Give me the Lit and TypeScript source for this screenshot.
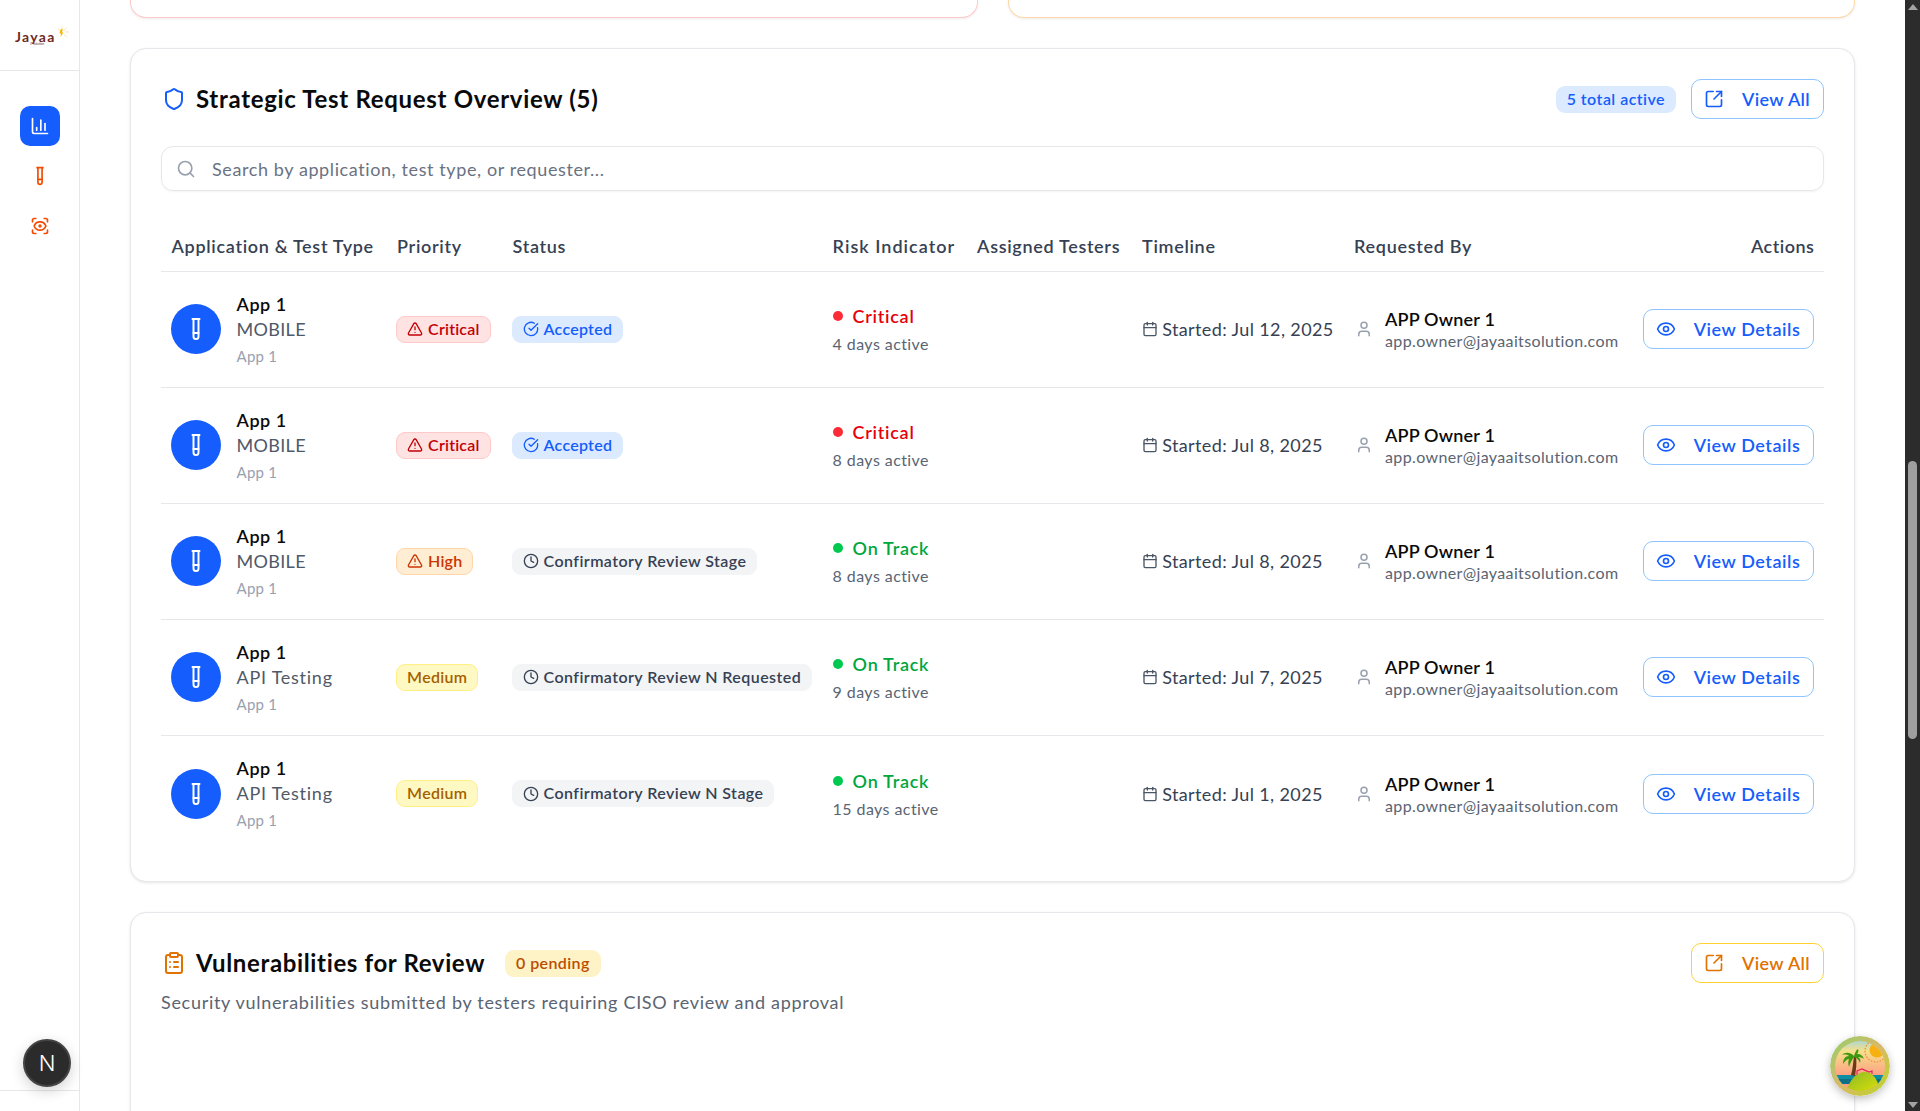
import { LitElement, html, css, svg } from "lit";
import { customElement } from "lit/decorators.js";

const I = {
  tube: svg`<path d="M14.5 2v17.5c0 1.4-1.1 2.5-2.5 2.5c-1.4 0-2.5-1.1-2.5-2.5V2"/><path d="M8.5 2h7"/><path d="M14.5 16h-5"/>`,
  chart: svg`<path d="M3 3v16a2 2 0 0 0 2 2h16"/><path d="M18 17V9"/><path d="M13 17V5"/><path d="M8 17v-3"/>`,
  scan: svg`<path d="M3 7V5a2 2 0 0 1 2-2h2"/><path d="M17 3h2a2 2 0 0 1 2 2v2"/><path d="M21 17v2a2 2 0 0 1-2 2h-2"/><path d="M7 21H5a2 2 0 0 1-2-2v-2"/><circle cx="12" cy="12" r="1"/><path d="M18.944 12.33a1 1 0 0 0 0-.66 7.5 7.5 0 0 0-13.888 0 1 1 0 0 0 0 .66 7.5 7.5 0 0 0 13.888 0"/>`,
  shield: svg`<path d="M20 13c0 5-3.5 7.5-7.66 8.95a1 1 0 0 1-.67-.01C7.5 20.5 4 18 4 13V6a1 1 0 0 1 1-1c2 0 4.5-1.2 6.24-2.72a1.17 1.17 0 0 1 1.52 0C14.51 3.81 17 5 19 5a1 1 0 0 1 1 1z"/>`,
  search: svg`<circle cx="11" cy="11" r="8"/><path d="m21 21-4.3-4.3"/>`,
  ext: svg`<path d="M21 13v6a2 2 0 0 1-2 2H5a2 2 0 0 1-2-2V5a2 2 0 0 1 2-2h6"/><path d="m21 3-9 9"/><path d="M15 3h6v6"/>`,
  alert: svg`<path d="m21.73 18-8-14a2 2 0 0 0-3.48 0l-8 14A2 2 0 0 0 4 21h16a2 2 0 0 0 1.73-3"/><path d="M12 9v4"/><path d="M12 17h.01"/>`,
  check: svg`<path d="M21.801 10A10 10 0 1 1 17 3.335"/><path d="m9 11 3 3L22 4"/>`,
  clock: svg`<circle cx="12" cy="12" r="10"/><path d="M12 6v6l4 2"/>`,
  cal: svg`<path d="M8 2v4"/><path d="M16 2v4"/><rect x="3" y="4" width="18" height="18" rx="2"/><path d="M3 10h18"/>`,
  user: svg`<path d="M19 21v-2a4 4 0 0 0-4-4H9a4 4 0 0 0-4 4v2"/><circle cx="12" cy="7" r="4"/>`,
  eye: svg`<path d="M2.062 12.348a1 1 0 0 1 0-.696 10.75 10.75 0 0 1 19.876 0 1 1 0 0 1 0 .696 10.75 10.75 0 0 1-19.876 0"/><circle cx="12" cy="12" r="3"/>`,
  clip: svg`<rect x="8" y="2" width="8" height="4" rx="1"/><path d="M16 4h2a2 2 0 0 1 2 2v14a2 2 0 0 1-2 2H6a2 2 0 0 1-2-2V6a2 2 0 0 1 2-2h2"/><path d="M12 11h4"/><path d="M12 16h4"/><path d="M8 11h.01"/><path d="M8 16h.01"/>`,
};
const icon = (p: unknown, cls = "") =>
  html`<svg class="ic ${cls}" viewBox="0 0 24 24" fill="none" stroke="currentColor" stroke-width="2" stroke-linecap="round" stroke-linejoin="round">${p}</svg>`;

type Row = {
  test: string; pri: string; priCls: string; status: string; stCls: string; stIc: unknown;
  risk: string; riskCls: string; days: string; date: string;
};
const rows: Row[] = [
  { test: "MOBILE", pri: "Critical", priCls: "crit", status: "Accepted", stCls: "acc", stIc: I.check, risk: "Critical", riskCls: "r", days: "4 days active", date: "Jul 12, 2025" },
  { test: "MOBILE", pri: "Critical", priCls: "crit", status: "Accepted", stCls: "acc", stIc: I.check, risk: "Critical", riskCls: "r", days: "8 days active", date: "Jul 8, 2025" },
  { test: "MOBILE", pri: "High", priCls: "high", status: "Confirmatory Review Stage", stCls: "rev", stIc: I.clock, risk: "On Track", riskCls: "g", days: "8 days active", date: "Jul 8, 2025" },
  { test: "API Testing", pri: "Medium", priCls: "med", status: "Confirmatory Review N Requested", stCls: "rev", stIc: I.clock, risk: "On Track", riskCls: "g", days: "9 days active", date: "Jul 7, 2025" },
  { test: "API Testing", pri: "Medium", priCls: "med", status: "Confirmatory Review N Stage", stCls: "rev", stIc: I.clock, risk: "On Track", riskCls: "g", days: "15 days active", date: "Jul 1, 2025" },
];

@customElement("app-root")
export class AppRoot extends LitElement {
  static styles = css`
    :host { display: flex; width: 1920px; height: 1111px; overflow: hidden; position: relative; background: #fff;
      font-family: Lato, "Noto Sans", sans-serif; color: #0a0a0a; }
    * { box-sizing: border-box; }
    .ic { display: block; flex: none; width: 16px; height: 16px; }

    .side { width: 80px; flex: none; border-right: 1px solid #e5e7eb; display: flex; flex-direction: column; }
    .logo { height: 71px; border-bottom: 1px solid #e5e7eb; padding: 20px 0 0 15px; display: flex; align-items: flex-start; position: relative; }
    .logo-t { font-size: 14px; line-height: 14px; font-weight: 700; letter-spacing: 1.3px; color: #6f2b1f; margin-top: 10px; position: relative; }
    .logo-t small { position: absolute; left: 15px; top: 13px; font-size: 3px; line-height: 3px; font-weight: 400; letter-spacing: 0; white-space: nowrap; }
    .logo svg { width: 16px; height: 16px; margin: 5px 0 0 -2px; }
    .nav { padding: 35px 20px 0; display: flex; flex-direction: column; gap: 10px; }
    .nav div { width: 40px; height: 40px; border-radius: 10px; display: flex; align-items: center; justify-content: center; color: #f54a00; }
    .nav div .ic { width: 20px; height: 20px; }
    .nav .on { background: #155dfc; color: #fff; }
    .side-foot { margin-top: auto; height: 21px; border-top: 1px solid #e5e7eb; }

    .main { flex: 1; min-width: 0; padding: 0 50px; overflow: hidden; display: flex; flex-direction: column; gap: 30px; }
    .stubs { flex: none; display: grid; grid-template-columns: 1fr 1fr; gap: 30px; }
    .stub { height: 18px; background: #fff; border: 1px solid #ffc9c9; border-top: 0; border-radius: 0 0 16px 16px; box-shadow: 0 1px 3px rgba(0,0,0,.08); }
    .stub.o { border-color: #ffd6a7; }
    .card { flex: none; background: #fff; border: 1px solid #e5e7eb; border-radius: 16px; padding: 30px; box-shadow: 0 1px 3px rgba(0,0,0,.1); }
    .card.last { min-height: 400px; padding-bottom: 0; }

    .head { display: flex; align-items: center; height: 40px; }
    .ttl { display: flex; align-items: center; gap: 10px; font-size: 24px; font-weight: 700; letter-spacing: .69px; }
    .ttl.vt { letter-spacing: .64px; }
    .ttl span { padding-bottom: 2px; }
    .ttl .ic { width: 24px; height: 24px; color: #155dfc; margin-left: 1px; }
    .vt .ic { color: #e17100; }
    .sp { flex: 1; }
    .tag { display: flex; align-items: center; height: 27px; padding: 0 11px 2px; border-radius: 9px; font-size: 16px; font-weight: 600; background: #dbeafe; color: #155dfc; letter-spacing: .46px; }
    .tag.p { background: #fef3c6; color: #bb4d00; margin-left: 20px; letter-spacing: .4px; }
    .btn { display: flex; align-items: center; height: 40px; padding: 0 13px 0 12px; gap: 18px; background: #fff; border: 1px solid #8ec5ff; border-radius: 10px; color: #155dfc; font-size: 18px; font-weight: 600; letter-spacing: .56px; white-space: nowrap; }
    .btn .ic { width: 20px; height: 20px; }
    .head .btn { margin-left: 15px; letter-spacing: .35px; }
    .btn.a { border-color: #ffd230; color: #e17100; }

    .search { margin-top: 27px; height: 45px; border: 1px solid #e5e7eb; border-radius: 12px; display: flex; align-items: center; padding: 0 14px; gap: 16px; font-size: 18px; letter-spacing: .6px; color: #6a7282; box-shadow: 0 1px 2px rgba(0,0,0,.05); }
    .search .ic { width: 20px; height: 20px; color: #99a1af; }

    .grid { display: grid; grid-template-columns: 225.5px 115.5px 320px 144.5px 165px 212px 289px 191.5px; align-items: center; }
    .th { margin-top: 32px; height: 49px; border-bottom: 1px solid #e5e7eb; font-size: 18px; font-weight: 600; color: #364153; letter-spacing: .68px; white-space: nowrap; padding-bottom: 2px; }
    .th > div { padding: 0 9.6px 0 10.6px; }
    .th > div:nth-child(4) { letter-spacing: 1.02px; }
    .th > div:nth-child(8) { letter-spacing: .5px; }
    .end { text-align: right; }
    .tr { height: 116px; border-bottom: 1px solid #e5e7eb; padding-bottom: 1px; }
    .tr:last-child { height: 115px; border-bottom: 0; padding-bottom: 0; }
    .tr > div { padding: 0 9.6px; min-width: 0; }
    .tr > div:nth-child(4) { padding-left: 10.6px; }
    .tr > div:nth-child(6) { padding-left: 10.2px; }
    .tr > div:nth-child(7) { padding-left: 11.5px; }

    .app { display: flex; align-items: center; gap: 16px; }
    .av { width: 50px; height: 50px; border-radius: 50%; background: #155dfc; color: #fff; display: flex; align-items: center; justify-content: center; flex: none; }
    .av .ic { width: 24px; height: 24px; }
    .a1 { font-size: 18px; line-height: 26px; font-weight: 600; letter-spacing: .5px; }
    .a2 { font-size: 18px; line-height: 24px; color: #4f5968; letter-spacing: .3px; }
    .a2.api { letter-spacing: .74px; }
    .a3 { font-size: 15px; line-height: 24px; margin-top: 3px; color: #99a1af; letter-spacing: .2px; }

    .bd { display: inline-flex; align-items: center; height: 27px; padding: 0 10px 2px; gap: 5px; border: 1px solid transparent; border-radius: 9px; font-size: 16px; font-weight: 600; white-space: nowrap; letter-spacing: .2px; vertical-align: middle; }
    .bd .ic { margin-top: 2px; }
    .crit { background: #ffe2e2; border-color: #ffc9c9; color: #c10007; }
    .high { background: #ffedd4; border-color: #ffd6a7; color: #ca3500; }
    .med { background: #fef9c2; border-color: #fff085; color: #a65f00; letter-spacing: .3px; }
    .acc { background: #dbeafe; color: #155dfc; border-color: #dbeafe; letter-spacing: .25px; }
    .rev { background: #f3f4f6; color: #364153; border-color: #f3f4f6; letter-spacing: .43px; }

    .risk { display: flex; align-items: center; gap: 10px; font-size: 18px; font-weight: 600; line-height: 26px; letter-spacing: .72px; }
    .risk i { width: 10px; height: 10px; border-radius: 50%; display: block; }
    .r { color: #e7000b; } .r i { background: #fb2c36; }
    .g { color: #00a63e; } .g i { background: #00c950; }
    .days { font-size: 16px; line-height: 22px; margin-top: 4px; color: #5a6472; letter-spacing: .42px; }
    .date { display: flex; align-items: center; gap: 4.5px; font-size: 18px; color: #364153; white-space: nowrap; letter-spacing: .38px; }
    .date .ic { color: #4a5565; }
    .by { display: flex; align-items: center; gap: 12px; }
    .by .ic { width: 18px; height: 18px; color: #99a1af; }
    .n1 { font-size: 18px; line-height: 24px; font-weight: 600; letter-spacing: .2px; }
    .n2 { font-size: 16px; line-height: 20px; color: #5a6472; letter-spacing: .37px; }
    .act { display: flex; justify-content: flex-end; }

    .sub { margin-top: 6px; font-size: 18px; line-height: 26px; color: #5a6472; letter-spacing: .7px; }

    .bar { width: 15px; flex: none; background: #2c2c2c; display: flex; flex-direction: column; align-items: center; position: relative; }
    .thumb { position: absolute; left: 3px; top: 461px; width: 9px; height: 278px; border-radius: 5px; background: #9f9f9f; }
    .arr { width: 0; height: 0; border-left: 5px solid transparent; border-right: 5px solid transparent; }
    .arr.u { border-bottom: 6px solid #a3a3a3; margin-top: 4px; }
    .arr.d { border-top: 6px solid #a3a3a3; margin-top: auto; margin-bottom: 3px; }

    .next { position: absolute; left: 23px; top: 1039px; width: 48px; height: 48px; border-radius: 50%; background: #2b2b2b; border: 2px solid #444; box-shadow: 0 4px 14px rgba(0,0,0,.18); display: flex; align-items: center; justify-content: center; color: #fff; font-size: 22px; font-weight: 300; font-family: Inter, sans-serif; }
    .bot { position: absolute; left: 1830px; top: 1036px; width: 60px; height: 60px; border-radius: 50%; box-shadow: 0 3px 8px rgba(0,0,0,.25); }
  `;

  row(r: Row) {
    return html`<div class="grid tr">
      <div class="app">
        <div class="av">${icon(I.tube)}</div>
        <div><div class="a1">App 1</div><div class="a2 ${r.test === "MOBILE" ? "" : "api"}">${r.test}</div><div class="a3">App 1</div></div>
      </div>
      <div><span class="bd ${r.priCls}">${r.priCls === "med" ? "" : icon(I.alert)}${r.pri}</span></div>
      <div><span class="bd ${r.stCls}">${icon(r.stIc)}${r.status}</span></div>
      <div><div class="risk ${r.riskCls}"><i></i>${r.risk}</div><div class="days">${r.days}</div></div>
      <div></div>
      <div class="date">${icon(I.cal)}Started: ${r.date}</div>
      <div class="by">${icon(I.user)}<div><div class="n1">APP Owner 1</div><div class="n2">app.owner@jayaaitsolution.com</div></div></div>
      <div class="act"><div class="btn">${icon(I.eye)}View Details</div></div>
    </div>`;
  }

  render() {
    return html`
      <aside class="side">
        <div class="logo">
          <div class="logo-t">Jayaa<small>IT Solution</small></div>
          <svg viewBox="0 0 16 16"><g stroke="#f8d9a8" stroke-width=".7"><path d="M8 1v4M12.500 2.500 10 6M15 7h-4M13 12 10 9.500M3.500 3 6 6"/></g><path d="M6.500 4.500 9 4 7.800 7.500 9.500 7.500 6.500 12 7 8.500 5.500 8.500z" fill="#f7b500"/></svg>
        </div>
        <nav class="nav">
          <div class="on">${icon(I.chart)}</div>
          <div>${icon(I.tube)}</div>
          <div>${icon(I.scan)}</div>
        </nav>
        <div class="side-foot"></div>
      </aside>

      <main class="main">
        <div class="stubs"><div class="stub"></div><div class="stub o"></div></div>

        <section class="card">
          <div class="head">
            <div class="ttl">${icon(I.shield)}<span>Strategic Test Request Overview (5)</span></div>
            <div class="sp"></div>
            <div class="tag">5 total active</div>
            <div class="btn">${icon(I.ext)}View All</div>
          </div>
          <div class="search">${icon(I.search)}Search by application, test type, or requester...</div>
          <div class="grid th">
            <div>Application &amp; Test Type</div><div>Priority</div><div>Status</div><div>Risk Indicator</div>
            <div>Assigned Testers</div><div>Timeline</div><div>Requested By</div><div class="end">Actions</div>
          </div>
          ${rows.map((r) => this.row(r))}
        </section>

        <section class="card last">
          <div class="head">
            <div class="ttl vt">${icon(I.clip)}<span>Vulnerabilities for Review</span></div>
            <div class="tag p">0 pending</div>
            <div class="sp"></div>
            <div class="btn a">${icon(I.ext)}View All</div>
          </div>
          <div class="sub">Security vulnerabilities submitted by testers requiring CISO review and approval</div>
        </section>
      </main>

      <div class="bar"><div class="arr u"></div><div class="thumb"></div><div class="arr d"></div></div>

      <div class="next">N</div>
      <svg class="bot" viewBox="0 0 60 60">
        <defs>
          <linearGradient id="ring" x1="0" y1="0" x2="1" y2="1"><stop offset="0" stop-color="#8fd16a"/><stop offset=".5" stop-color="#d9b86a"/><stop offset="1" stop-color="#b8d820"/></linearGradient>
          <linearGradient id="sky" x1="0" y1="0" x2="0" y2="1"><stop offset="0" stop-color="#8fd3ee"/><stop offset=".25" stop-color="#f5e08a"/><stop offset=".7" stop-color="#ff9a82"/></linearGradient>
          <linearGradient id="hill" x1="0" y1="0" x2="1" y2="1"><stop offset="0" stop-color="#8ab82a"/><stop offset="1" stop-color="#e6e600"/></linearGradient>
          <clipPath id="in"><circle cx="30" cy="30" r="25"/></clipPath>
        </defs>
        <circle cx="30" cy="30" r="30" fill="url(#ring)"/>
        <g clip-path="url(#in)">
          <rect width="60" height="60" fill="url(#sky)"/>
          <circle cx="47" cy="14" r="7.500" fill="#f7b012"/>
          <circle cx="46" cy="15" r="11" fill="none" stroke="#f08a3c" stroke-width="1.200" stroke-dasharray="1.500 1.500"/>
          <rect y="39" width="60" height="9" fill="#0f8ea3"/>
          <rect y="43" width="60" height="5" fill="#0b6f86"/>
          <path d="M24 20c-1 6-1 13-3 19l4 1c1-6 2-13 1-20z" fill="#6b3a1a"/>
          <path d="M24 20c-4-4-9-4-12-1 4-1 6 0 7 1-4 0-6 3-6 8 2-3 4-5 6-5-1 2-1 5 0 8 1-4 3-7 5-10 3 1 5 3 6 6 1-3 0-5-2-6 3 0 5 1 6 2-1-3-3-5-7-5 1-1 2-3 1-5-2 1-3 4-4 7z" fill="#3f9a12"/>
          <path d="M27 39v-4l5-2 7 3 3-1v3" fill="none" stroke="#e0245e" stroke-width="1.200"/>
          <path d="M16 60c1-14 10-24 19-24 8 0 14 8 16 24z" fill="url(#hill)"/>
        </g>
      </svg>
    `;
  }
}
